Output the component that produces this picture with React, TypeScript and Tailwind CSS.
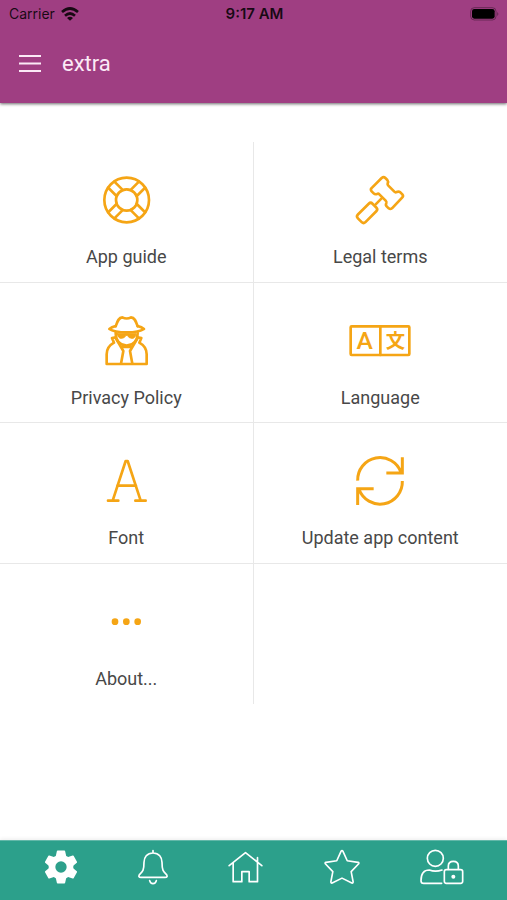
import type { ReactNode } from "react";

function TileIcon({ viewBox, children }: { viewBox: string; children: ReactNode }) {
  return (
    <svg
      viewBox={viewBox}
      className="size-16"
      fill="none"
      stroke="currentColor"
      strokeWidth={8}
      strokeLinecap="round"
      strokeLinejoin="round"
      aria-hidden="true"
    >
      {children}
    </svg>
  );
}

const tiles = [
  {
    label: "App guide",
    icon: (
      <TileIcon viewBox="-98 -96 192 192">
        <circle r="67" />
        <circle r="32" />
        {[45, 135, 225, 315].map((a) => (
          <path key={a} d="M29 -13H65M29 13H65" transform={`rotate(${a})`} />
        ))}
      </TileIcon>
    ),
  },
  {
    label: "Legal terms",
    icon: (
      <TileIcon viewBox="55 9 192 192">
        <path d="M125 70L156 39q6-5 11 0l6 6q4 5 1 10q-1 4 2 7l18 18q3 3 7 1q6-3 11 1l6 6q4 5 0 9L187 130q-5 4-10 0l-6-6q-4-4-1-10q1-4-2-7l-19-19q-3-3-7-1q-6 2-10-2l-6-6q-4-5-1-9z" />
        <path d="M155 101L138 118" />
        <rect x="-32" y="-16" width="62" height="32" rx="8" transform="translate(113 143) rotate(-45)" />
      </TileIcon>
    ),
  },
  {
    label: "Privacy Policy",
    icon: (
      <TileIcon viewBox="102 12 192 192">
        <path d="M167 63q-12 3-19 9q14 10 52 10t52-10q-7-6-19-9" />
        <path d="M167 64C172 50 176 37 187 37Q200 44 213 37C224 37 228 50 233 64" />
        <path d="M167 84q1 36 33 38q32-2 33-38" />
        <path d="M172 86h56q-2 14-12 14q-10 0-14-9h-4q-4 9-14 9q-10 0-12-14z" fill="currentColor" strokeWidth="3" />
        <path d="M167 97l-11 2l6 14q-22 12-22 35v29h120v-29q0-23-22-35l6-14l-11-2" />
        <path d="M168 101l22 37l-7 38M232 101l-22 37l7 38M184 126h32" />
      </TileIcon>
    ),
  },
  {
    label: "Language",
    icon: (
      <TileIcon viewBox="85 12 192 192">
        <rect x="93" y="64" width="176" height="86" rx="3" />
        <path d="M182 64V150" />
        <g fill="currentColor" stroke="none" textAnchor="middle">
          <text x="135" y="133" className="font-['Roboto',sans-serif] text-[74px] font-medium">A</text>
          <text x="227" y="130" className="font-['Noto_Sans_CJK_JP',sans-serif] text-[58px] font-bold">文</text>
        </g>
      </TileIcon>
    ),
  },
  {
    label: "Font",
    icon: (
      <TileIcon viewBox="42 12 192 192">
        <path d="M98 167L137 48h6L182 167M112 122H168M84 167H115M166 167H197" />
      </TileIcon>
    ),
  },
  {
    label: "Update app content",
    icon: (
      <TileIcon viewBox="175 12 192 192">
        <g strokeWidth="9" strokeLinecap="butt" strokeLinejoin="miter">
          <path d="M204 107A67 67 0 0 1 334 82M338 37V84H290" />
          <path d="M338 108A67 67 0 0 1 208 133M204 180V131H252" />
        </g>
      </TileIcon>
    ),
  },
  {
    label: "About...",
    icon: (
      <TileIcon viewBox="43 -31 192 192">
        <g fill="currentColor" stroke="none">
          <circle cx="106" cy="64" r="10" />
          <circle cx="140" cy="64" r="10" />
          <circle cx="174" cy="64" r="10" />
        </g>
      </TileIcon>
    ),
  },
];

const navIcon = {
  fill: "none",
  stroke: "currentColor",
  strokeWidth: 5,
  strokeLinecap: "round",
  strokeLinejoin: "round",
  "aria-hidden": true,
} as const;

const tabs = [
  {
    label: "Settings",
    icon: (
      <svg {...navIcon} viewBox="-48 -54 96 108" className="h-9 w-8">
        <circle r="27" strokeWidth="20" />
        {[0, 60, 120, 180, 240, 300].map((a) => (
          <path key={a} d="M-10 -47h20l3 14h-26z" fill="currentColor" transform={`rotate(${a})`} />
        ))}
      </svg>
    ),
  },
  {
    label: "Notifications",
    icon: (
      <svg {...navIcon} viewBox="411 58 90 108" className="h-9 w-[30px]">
        <path d="M456 63V70M456 70C438 70 429 83 429 98C429 124 424 126 416 134Q410 143 420 143H492Q502 143 496 134C488 126 483 124 483 98C483 83 474 70 456 70" />
        <path d="M446 153q2 9 10 9t10-9" />
      </svg>
    ),
  },
  {
    label: "Home",
    icon: (
      <svg {...navIcon} viewBox="683 58 104 108" className="h-9 w-[35px]">
        <path d="M686 108L735 69L784 108M698 100V156H724V126H746V156H771V84" />
      </svg>
    ),
  },
  {
    label: "Favourites",
    icon: (
      <svg {...navIcon} viewBox="210 58 110 108" className="h-9 w-9">
        <path d="M262 64q3-4 6 0L281 93L314 98q4 1 2 4L293 126L299 157q0 5-4 4L265 146L235 161q-4 1-4-4L237 126L214 102q-2-3 2-4L249 93z" />
      </svg>
    ),
  },
  {
    label: "Account",
    icon: (
      <svg {...navIcon} viewBox="499 58 132 108" className="h-9 w-11">
        <circle cx="545" cy="86" r="24" />
        <path d="M564 161H510Q502 161 502 153C502 133 511 121 527 121Q545 128 565 121" />
        <rect x="572" y="120" width="55" height="41" rx="6" />
        <path d="M584 119V109q0-14 15-14t15 14v10" />
        <circle cx="599" cy="141" r="6" fill="currentColor" stroke="none" />
      </svg>
    ),
  },
];

function StatusBar() {
  return (
    <div className="grid h-7 grid-cols-3 items-center pl-[9px] pr-[7px] font-['Inter',sans-serif] text-sm text-black/85">
      <div className="flex items-center gap-1.5">
        <span>Carrier</span>
        <svg viewBox="0 0 54 42" className="h-3.5 w-[18px]" fill="none" stroke="currentColor" strokeWidth="8" aria-hidden="true">
          <path d="M3 15Q27 -6 51 15M12 26Q27 13 42 26" />
          <path d="M27 41L18 33Q27 26 36 33z" fill="currentColor" stroke="none" />
        </svg>
      </div>
      <span className="text-center text-[15px] font-semibold">9:17 AM</span>
      <svg viewBox="0 0 90 42" className="h-3.5 w-[30px] justify-self-end" aria-hidden="true">
        <rect x="2" y="2" width="76" height="37" rx="11" fill="none" stroke="currentColor" strokeOpacity="0.4" strokeWidth="3" />
        <rect x="6" y="6" width="68" height="29" rx="7" fill="black" />
        <path d="M82 15q6 6 0 12z" fill="currentColor" fillOpacity="0.5" />
      </svg>
    </div>
  );
}

export default function App() {
  return (
    <div className="flex min-h-screen flex-col bg-white font-['Roboto',sans-serif]">
      <header className="bg-[#9f3e82] shadow-[0_1px_3px_rgba(0,0,0,0.6)]">
        <StatusBar />
        <div className="flex items-center gap-[21px] px-[19px] pb-6 pt-[21px] text-[#fbe9f6]">
          <button type="button" aria-label="Menu">
            <svg viewBox="0 0 22 20" className="h-5 w-[22px]" stroke="currentColor" strokeWidth="2" aria-hidden="true">
              <path d="M0 2H22M0 9.5H22M0 17H22" />
            </svg>
          </button>
          <h1 className="text-[22px] leading-[30px]">extra</h1>
        </div>
      </header>

      <main className="flex-1 pb-10 pt-[39px]">
        <div className="grid min-h-[562px] grid-cols-2 grid-rows-4">
          {tiles.map((tile, i) => (
            <button
              key={tile.label}
              type="button"
              className={`flex flex-col items-center border-[#e8e8e8] pt-[26px] ${i % 2 === 0 ? "border-r" : ""} ${
                i < 6 ? "border-b" : ""
              }`}
            >
              <span className="text-[#f5a515]">{tile.icon}</span>
              <span className="mt-[13px] text-lg leading-6 text-[#484848]">{tile.label}</span>
            </button>
          ))}
        </div>
      </main>

      <nav className="flex h-[60px] items-start justify-between border-t border-[#62b8a9] bg-[#2ca08b] pl-[45px] pr-[43px] pt-2 text-white shadow-[0_-1px_4px_rgba(0,0,0,0.08)]">
        {tabs.map((tab) => (
          <button key={tab.label} type="button" aria-label={tab.label}>
            {tab.icon}
          </button>
        ))}
      </nav>
    </div>
  );
}
